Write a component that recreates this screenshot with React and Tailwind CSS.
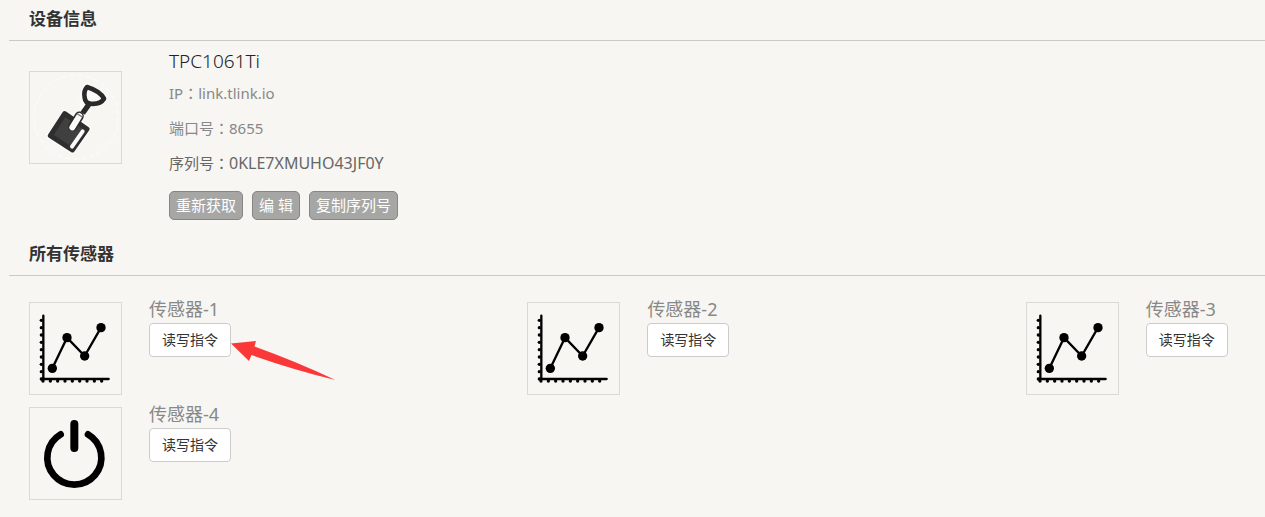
import React from "react";

const TICKS = [0, 1, 2, 3, 4, 5, 6, 7, 8];

function ShovelIcon() {
  return (
    <svg viewBox="30 36 273 273" className="size-full" aria-hidden="true">
      <circle cx="168" cy="172" r="126" fill="none" stroke="#ffffff" strokeWidth="3" strokeDasharray="14 10" opacity="0.7" />
      <g stroke="#ffffff" strokeWidth="16" strokeLinejoin="round" opacity="0.7">
        <path d="M134 158 L206 206 L157 274 L86 228 Z" fill="#fff" />
        <path d="M200 76 L256 112 Q246 138 208 130 L190 160 Q180 100 200 76 Z" fill="#fff" />
      </g>
      <path d="M134 161 L201 207 L157 270 L91 227 Z" fill="#404040" stroke="#2e2e2e" strokeWidth="15" strokeLinejoin="round" />
      <path d="M208 131 L188 160" stroke="#2a2a2a" strokeWidth="16" />
      <path d="M201 81 Q190 93 194 113 Q196 129 211 131 Q241 134 252 116 Q240 93 201 81 Z" fill="#fbfbfa" stroke="#2a2a2a" strokeWidth="14" strokeLinejoin="round" />
      <path d="M178 168 L158 200" stroke="#2a2a2a" strokeWidth="27" strokeLinecap="round" />
      <path d="M178 168 L157 202" stroke="#fbfbfa" strokeWidth="18" strokeLinecap="round" />
      <path d="M171 161 L187 171" stroke="#777777" strokeWidth="4" />
      <path d="M188 214 L156 260" stroke="#fbfbfa" strokeWidth="12" strokeLinecap="round" />
    </svg>
  );
}

function ChartIcon() {
  return (
    <svg viewBox="30 24 273 273" className="size-full" aria-hidden="true">
      <g stroke="#000" strokeWidth="7" strokeLinecap="round" strokeLinejoin="round" fill="none">
        <path d="M70 62 V252 M63 252 H266" />
        <path d="M97 220 L141 128 L194 183 L243 98" />
      </g>
      {TICKS.map((i) => (
        <g key={i}>
          <circle cx="64" cy={76 + i * 22} r="5" />
          <circle cx={69 + i * 22} cy="258" r="5" />
        </g>
      ))}
      <circle cx="97" cy="220" r="14" />
      <circle cx="141" cy="128" r="14" />
      <circle cx="194" cy="183" r="14" />
      <circle cx="243" cy="98" r="14" />
    </svg>
  );
}

function PowerIcon() {
  return (
    <svg viewBox="30 24 273 273" className="size-full" aria-hidden="true">
      <g fill="none" stroke="#000" strokeLinecap="round">
        <path d="M122 103 A81 81 0 1 0 204 103" strokeWidth="20" />
        <path d="M163 72 V144" strokeWidth="24" />
      </g>
    </svg>
  );
}

function Arrow() {
  return (
    <svg viewBox="0 0 105 40" className="pointer-events-none absolute left-full top-[17px] h-[40px] w-[105px]" aria-hidden="true">
      <path d="M0 3.5 L25 1 L23.5 6.5 Q64 21 104.5 40 Q60 29 20.5 15 L18 21 Z" fill="#fb3838" />
    </svg>
  );
}

function IconBox({ children }) {
  return <div className="size-[93px] shrink-0 border border-[#d9d9d6]">{children}</div>;
}

function SectionTitle({ children }) {
  return (
    <h2 className="border-b border-[#c9c9c7] pt-[5px] pb-[7px] pl-5 text-[17px] leading-7 font-bold text-[#333]">{children}</h2>
  );
}

function Colon() {
  return <span className="font-['Noto_Sans_CJK_TC',sans-serif]">：</span>;
}

function ActionButton({ children }) {
  return (
    <button type="button" className="flex h-[29px] items-center rounded-[5px] border border-[#858585] bg-[#a6a6a5] px-1.5 pb-0.5 text-[15px] leading-5 text-white">
      {children}
    </button>
  );
}

function Sensor({ name, icon, pointed }) {
  return (
    <li className="flex gap-[27px]">
      <div className="pt-[5px]">
        <IconBox>{icon}</IconBox>
      </div>
      <div>
        <h3 className="h-[26px] text-lg leading-6 text-[#888]">{name}</h3>
        <div className="relative w-fit">
          <button type="button" className="h-[34px] rounded-[4px] border border-[#ccc] bg-white px-3 text-sm whitespace-nowrap text-[#333]">
            读写指令
          </button>
          {pointed && <Arrow />}
        </div>
      </div>
    </li>
  );
}

function InfoLine({ children }) {
  return <p className="flex h-[35px] items-center pb-0.5 leading-6">{children}</p>;
}

export default function App() {
  return (
    <main className="min-h-screen bg-[#f7f6f2] pl-[9px] font-['Noto_Sans','Noto_Sans_CJK_SC',sans-serif]">
      <section>
        <SectionTitle>设备信息</SectionTitle>
        <div className="flex gap-[47px] pb-[15px] pl-5">
          <div className="pt-[30px]">
            <IconBox>
              <ShovelIcon />
            </IconBox>
          </div>
          <div className="pt-[5px] text-[15px] text-[#888]">
            <h3 className="text-[19px] leading-[30px] font-light text-[#222]">TPC1061Ti</h3>
            <InfoLine>IP<Colon />link.tlink.io</InfoLine>
            <InfoLine>端口号<Colon />8655</InfoLine>
            <div className="text-[#666]">
              <InfoLine>序列号<Colon /><span className="text-base">0KLE7XMUHO43JF0Y</span></InfoLine>
            </div>
            <div className="flex gap-[9px] pt-[10px]">
              <ActionButton>重新获取</ActionButton>
              <ActionButton>编 辑</ActionButton>
              <ActionButton>复制序列号</ActionButton>
            </div>
          </div>
        </div>
      </section>
      <section>
        <SectionTitle>所有传感器</SectionTitle>
        <ul className="grid grid-cols-[25fr_25fr_12fr] gap-y-[7px] pt-[21px] pl-5">
          <Sensor name="传感器-1" icon={<ChartIcon />} pointed />
          <Sensor name="传感器-2" icon={<ChartIcon />} />
          <Sensor name="传感器-3" icon={<ChartIcon />} />
          <Sensor name="传感器-4" icon={<PowerIcon />} />
        </ul>
      </section>
    </main>
  );
}
